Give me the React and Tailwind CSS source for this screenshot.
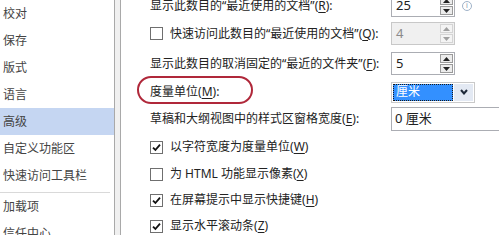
import React from 'react';

const font = { fontFamily: '"Noto Sans", "Noto Sans CJK SC", sans-serif' };

// 带下划线的快捷键标签
const Label = ({ text, hotkey, tail = ':' }) => (
  <span className="whitespace-nowrap">
    {text}(<span className="underline underline-offset-2">{hotkey}</span>){tail}
  </span>
);

const Arrow = ({ up, disabled }) => (
  <svg width="7" height="4" viewBox="0 0 7 4">
    <path d={up ? 'M0 4 L3.5 0 L7 4 Z' : 'M0 0 L3.5 4 L7 0 Z'} fill={disabled ? '#a0a0a0' : '#222'} />
  </svg>
);

const Spinner = ({ value, disabled }) => (
  <div
    className={`flex h-[23px] w-[64px] border ${
      disabled ? 'border-[#c8c8c8] bg-[#f0f0f0] text-[#8a8a8a]' : 'border-[#abadb3] bg-white text-[#222]'
    }`}
  >
    <div className="flex-1 pl-[4px] text-[13px] leading-[21px]">{value}</div>
    <div className="flex w-[14px] flex-col gap-[1px] py-[1px] pr-[1px]">
      <div
        className={`flex flex-1 items-center justify-center border ${
          disabled ? 'border-[#d4d4d4] bg-[#f4f4f4]' : 'border-[#9a9a9a] bg-[#ececec]'
        }`}
      >
        <Arrow up disabled={disabled} />
      </div>
      <div
        className={`flex flex-1 items-center justify-center border ${
          disabled ? 'border-[#d4d4d4] bg-[#f4f4f4]' : 'border-[#9a9a9a] bg-[#ececec]'
        }`}
      >
        <Arrow disabled={disabled} />
      </div>
    </div>
  </div>
);

const Checkbox = ({ checked }) => (
  <div className="flex h-[13px] w-[13px] shrink-0 items-center justify-center border border-[#6f6f6f] bg-white">
    {checked && (
      <svg width="9" height="9" viewBox="0 0 9 9">
        <path d="M1 4.6 L3.4 7 L8 1.6" fill="none" stroke="#111" strokeWidth="1.8" />
      </svg>
    )}
  </div>
);

const navItems = ['校对', '保存', '版式', '语言', '高级', '自定义功能区', '快速访问工具栏'];

export default function App() {
  return (
    <div className="flex h-[235px] w-[499px] overflow-hidden bg-white text-[12px]" style={font}>
      {/* 左侧导航 */}
      <div className="w-[114px] shrink-0 text-[#444]">
        {navItems.map((item) => (
          <div
            key={item}
            className={`flex h-[27px] items-center pl-[3px] ${item === '高级' ? 'bg-[#c5d6f2]' : ''}`}
          >
            {item}
          </div>
        ))}
        <div className="mt-[3px] mr-[4px] h-px bg-[#d9d9d9]" />
        <div className="flex h-[27px] items-center pl-[3px]">加载项</div>
        <div className="flex h-[27px] items-center pl-[3px]">信任中心</div>
      </div>

      {/* 分隔条 */}
      <div className="w-[7px] shrink-0 border-x border-[#a9a9a9] bg-[#f0f0f0]" />

      {/* 右侧内容 */}
      <div className="-mt-[8px] flex-1 pl-[29px] text-[#222]">
        <div className="flex h-[27px] items-center">
          <div className="w-[241px]">
            <Label text="显示此数目的“最近使用的文档”" hotkey="R" />
          </div>
          <Spinner value="25" />
          <div className="ml-[7px] flex h-[10px] w-[10px] items-center justify-center rounded-full border border-[#9fb2c8] text-[7px] leading-none text-[#7f93ad]">
            i
          </div>
        </div>

        <div className="flex h-[29px] items-center">
          <div className="flex w-[241px] items-center gap-[7px]">
            <Checkbox />
            <Label text="快速访问此数目的“最近使用的文档”" hotkey="Q" />
          </div>
          <Spinner value="4" disabled />
        </div>

        <div className="flex h-[31px] items-center">
          <div className="w-[241px]">
            <Label text="显示此数目的取消固定的“最近的文件夹”" hotkey="F" />
          </div>
          <Spinner value="5" />
        </div>

        <div className="flex h-[26px] items-center">
          <div className="w-[241px]">
            <span className="relative">
              <Label text="度量单位" hotkey="M" />
              <span className="absolute -top-[7px] -bottom-[4px] -left-[13px] -right-[34px] rounded-[14px] border-2 border-[#b0283a]" />
            </span>
          </div>
          <div className="flex h-[21px] w-[84px] border border-[#c9c9c9] bg-white p-[1px]">
            <div className="flex flex-1 items-center border border-dotted border-[#1a1a1a] bg-[#3390ff] pl-[2px] text-white">
              厘米
            </div>
            <div className="ml-[1px] flex w-[19px] items-center justify-center bg-[#e3e9f3]">
              <svg width="8" height="6" viewBox="0 0 8 6">
                <path d="M1 1 L4 4.5 L7 1" fill="none" stroke="#1e2a3a" strokeWidth="2" />
              </svg>
            </div>
          </div>
        </div>

        <div className="flex h-[28px] items-center">
          <div className="w-[241px]">
            <Label text="草稿和大纲视图中的样式区窗格宽度" hotkey="E" />
          </div>
          <div className="flex h-[24px] flex-1 items-center border border-r-0 border-[#abadb3] pl-[3px] text-[13px]">
            0 厘米
          </div>
        </div>

        {[
          ['以字符宽度为度量单位', 'W', true, 28],
          ['为 HTML 功能显示像素', 'X', false, 26],
          ['在屏幕提示中显示快捷键', 'H', true, 26],
          ['显示水平滚动条', 'Z', true, 26],
        ].map(([text, key, checked, h]) => (
          <div key={key} className="flex items-center gap-[7px]" style={{ height: h }}>
            <Checkbox checked={checked} />
            <Label text={text} hotkey={key} tail="" />
          </div>
        ))}
      </div>
    </div>
  );
}
